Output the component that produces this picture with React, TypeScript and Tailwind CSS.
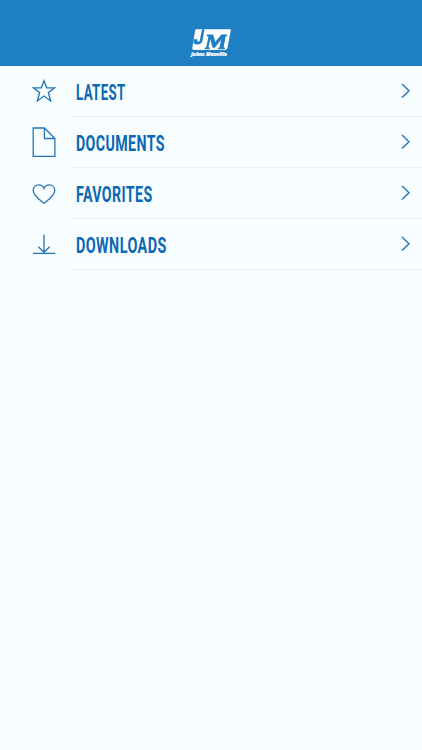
import type { ReactNode } from "react";

interface MenuItem {
  label: string;
  stretch: string;
  icon: ReactNode;
}

const items: MenuItem[] = [
  {
    label: "LATEST",
    stretch: "scale-x-[0.615]",
    icon: <path d="M12 2.7L14.7 9.8H22.6L16.4 14.5L18.7 23L12 18.1L5.3 23L7.6 14.5L1.4 9.8H9.3Z" />,
  },
  {
    label: "DOCUMENTS",
    stretch: "scale-x-[0.66]",
    icon: <path d="M1.2 -0.6H12.4L22.9 9.9V27.8H1.2ZM12.4 -0.6V9.9H22.9" transform="translate(0 -.4)" />,
  },
  {
    label: "FAVORITES",
    stretch: "scale-x-[0.66]",
    icon: (
      <path d="M12 23.2C8.5 20.4 1.2 15.8 1.2 10.2C1.2 7.1 3.6 4.9 6.5 4.9C9 4.9 11.2 6.2 12 8.5C12.8 6.2 15 4.9 17.5 4.9C20.4 4.9 22.8 7.1 22.8 10.2C22.8 15.8 15.5 20.4 12 23.2Z" />
    ),
  },
  {
    label: "DOWNLOADS",
    stretch: "scale-x-[0.67]",
    icon: <path d="M12 3.5V21.5M6.3 15.8L12 21.3L17.7 15.8M1 22.4H23.2" />,
  },
];

function Logo() {
  return (
    <svg width="42" height="32" viewBox="0 0 42 32" role="img" aria-label="Johns Manville">
      <path d="M5.5 2.3H41L37.6 20.2Q37 23 34.2 23H4.5Q2 23 2.4 20.4L4 10Z" fill="#fff" />
      <path
        d="M12 2.3L9.8 13.4Q9.4 14.9 8 14.7Q7 14.4 7.4 12.6Q5.2 11.3 3.6 12.4Q2.4 17.4 7.2 17.4Q11.6 17.4 12.6 13.4L14.4 2.3Z"
        fill="#1f7fc4"
      />
      <path
        d="M16.8 7.6H23.2L25.2 15L31.3 7.6H37.2L37 9L35.6 9.4L33.6 20.2L35 20.7L34.7 22.2H28L28.3 20.7L29.6 20.2L31 12.8L24.8 20.8H22.6L20.3 12L18.5 20.2L19.8 20.7L19.5 22.2H14.5L14.8 20.7L16.3 20.2L18.4 9.6L16.5 9Z"
        fill="#1f7fc4"
      />
      <text
        x="1"
        y="29.4"
        textLength="36"
        lengthAdjust="spacingAndGlyphs"
        fill="#fff"
        stroke="#fff"
        strokeWidth="0.2"
        className="font-['Open_Sans',sans-serif] text-[5.4px] font-extrabold italic"
      >
        Johns Manville
      </text>
    </svg>
  );
}

function MenuRow({ item }: { item: MenuItem }) {
  return (
    <a href="#" className="flex h-[51px]">
      <span className="flex w-[72px] shrink-0 justify-center pl-4 pt-3">
        <svg
          width="24"
          height="28"
          viewBox="0 0 24 28"
          fill="none"
          stroke="#2475b7"
          strokeWidth="1.3"
          className="overflow-visible"
        >
          {item.icon}
        </svg>
      </span>
      <span className="flex flex-1 items-center justify-between border-b border-[#e6eff5] pl-1 pr-3">
        <span
          className={`origin-left pt-1 font-['Roboto',sans-serif] text-[21.5px] leading-none font-bold tracking-[0.6px] text-[#0c68b4] ${item.stretch}`}
        >
          {item.label}
        </span>
        <svg width="9" height="16" viewBox="0 0 9 16" fill="none" stroke="#2475b7" strokeWidth="1.4">
          <path d="M1 0.9L8 7.7L1 14.5" />
        </svg>
      </span>
    </a>
  );
}

export default function App() {
  return (
    <div className="min-h-screen bg-[#f8feff]">
      <header className="flex h-[66px] items-end justify-center bg-[#1f7fc4] pb-[7px]">
        <Logo />
      </header>
      <nav>
        {items.map((item) => (
          <MenuRow key={item.label} item={item} />
        ))}
      </nav>
    </div>
  );
}
